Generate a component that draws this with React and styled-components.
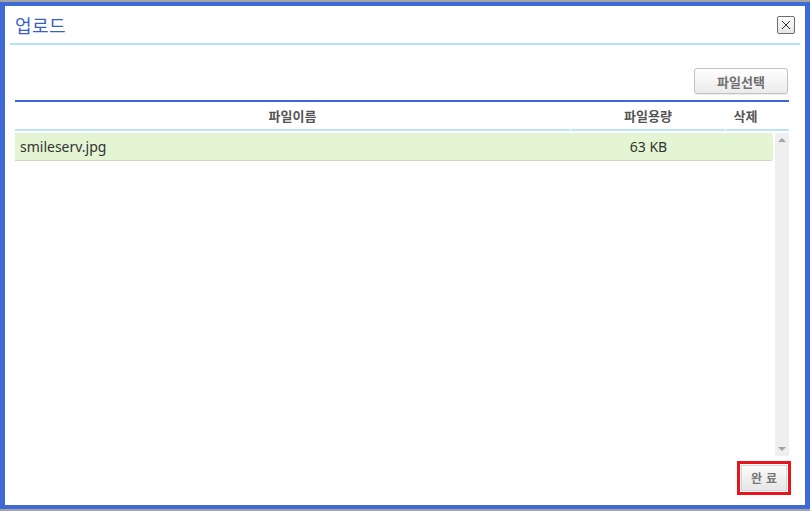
import styled, { createGlobalStyle } from 'styled-components';

const GlobalStyle = createGlobalStyle`
  html, body {
    margin: 0;
    padding: 0;
    background: #a4a4a4;
    font-family: "Noto Sans", "Noto Sans CJK KR", sans-serif;
  }
`;

const Dialog = styled.div`
  box-sizing: border-box;
  margin-top: 2px;
  width: 810px;
  height: 507px;
  border: 5px solid #3e6ad6;
  border-top-width: 4px;
  border-bottom-width: 4px;
  background: #fff;
  display: flex;
  flex-direction: column;
`;

const TitleBar = styled.div`
  display: flex;
  align-items: center;
  justify-content: space-between;
  height: 37px;
  margin: 0 5px;
  padding: 0 5px 0 5px;
  border-bottom: 2px solid #b6e2f3;
`;

const Title = styled.h1`
  margin: 0;
  font-size: 18px;
  font-weight: 400;
  color: #3a5ec6;
  letter-spacing: 0.5px;
`;

const CloseButton = styled.button`
  box-sizing: border-box;
  width: 18px;
  height: 18px;
  padding: 0;
  margin-top: 0;
  border: 1px solid #6e6e6e;
  border-radius: 2px;
  background: linear-gradient(#fdfdfd, #e6e6e6);
  display: flex;
  align-items: center;
  justify-content: center;
`;

const Body = styled.div`
  flex: 1;
  display: flex;
  flex-direction: column;
  padding: 0 16px 0 10px;
`;

const Toolbar = styled.div`
  display: flex;
  justify-content: flex-end;
  padding: 23px 1px 6px 0;
  border-bottom: 2px solid #3d69d4;
`;

const GrayButton = styled.button`
  box-sizing: border-box;
  width: 94px;
  height: 26px;
  border: 1px solid #c2c2c2;
  border-radius: 3px;
  background: linear-gradient(#ffffff, #ebebeb);
  color: #707070;
  font-family: inherit;
  font-size: 13px;
  font-weight: 700;
  box-shadow: 0 1px 1px rgba(0, 0, 0, 0.08);
`;

const HeaderRow = styled.div`
  display: grid;
  grid-template-columns: 556px 155px 1fr;
  height: 29px;
`;

const HeaderCell = styled.div`
  display: flex;
  align-items: center;
  justify-content: center;
  margin-right: ${(p) => (p.$last ? '0' : '1px')};
  padding-right: ${(p) => (p.$last ? '24px' : '0')};
  border-bottom: 2px solid #bde4f5;
  color: #555;
  font-size: 13px;
  font-weight: 700;
`;

const ListArea = styled.div`
  margin-top: 2px;
  height: 323px;
  display: flex;
`;

const Rows = styled.div`
  flex: 1;
  margin-right: 2px;
`;

const FileRow = styled.div`
  display: grid;
  grid-template-columns: 556px 155px 1fr;
  height: 27px;
  align-items: center;
  background: #e3f5d3;
  border-bottom: 1px solid #c9dcba;
  border-radius: 0 3px 3px 0;
  color: #333;
  font-size: 14px;
`;

const FileName = styled.div`
  padding-left: 5px;
`;

const FileSize = styled.div`
  text-align: center;
`;

const Scrollbar = styled.div`
  width: 14px;
  background: #efefef;
  display: flex;
  flex-direction: column;
  justify-content: space-between;
  align-items: center;
  padding: 5px 0;
`;

const Arrow = styled.div`
  width: 0;
  height: 0;
  border-left: 4px solid transparent;
  border-right: 4px solid transparent;
  ${(p) =>
    p.$down
      ? 'border-top: 4px solid #a3a3a3;'
      : 'border-bottom: 4px solid #a3a3a3;'}
`;

const Footer = styled.div`
  display: flex;
  justify-content: flex-end;
  padding-top: 5px;
  margin-right: -2px;
`;

const Highlight = styled.div`
  border: 3px solid #e8131b;
  padding: 1px;
`;

const DoneButton = styled.button`
  box-sizing: border-box;
  width: 46px;
  height: 26px;
  border: 1px solid #d6d6d6;
  background: linear-gradient(#fbfbfb, #e6e6e6);
  color: #777;
  font-family: inherit;
  font-size: 12px;
  font-weight: 700;
  letter-spacing: 4px;
  padding: 0 0 0 4px;
`;

export default function App() {
  return (
    <>
      <GlobalStyle />
      <Dialog>
        <TitleBar>
          <Title>업로드</Title>
          <CloseButton aria-label="close">
            <svg width="10" height="10" viewBox="0 0 10 10">
              <path d="M1 1 L9 9 M9 1 L1 9" stroke="#333" strokeWidth="1" fill="none" />
            </svg>
          </CloseButton>
        </TitleBar>
        <Body>
          <Toolbar>
            <GrayButton>파일선택</GrayButton>
          </Toolbar>
          <HeaderRow>
            <HeaderCell>파일이름</HeaderCell>
            <HeaderCell>파일용량</HeaderCell>
            <HeaderCell $last>삭제</HeaderCell>
          </HeaderRow>
          <ListArea>
            <Rows>
              <FileRow>
                <FileName>smileserv.jpg</FileName>
                <FileSize>63 KB</FileSize>
                <div />
              </FileRow>
            </Rows>
            <Scrollbar>
              <Arrow />
              <Arrow $down />
            </Scrollbar>
          </ListArea>
          <Footer>
            <Highlight>
              <DoneButton>완료</DoneButton>
            </Highlight>
          </Footer>
        </Body>
      </Dialog>
    </>
  );
}
